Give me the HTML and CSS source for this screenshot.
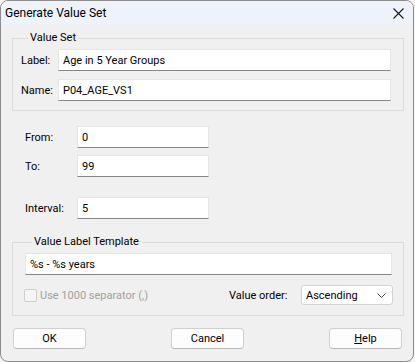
FILE: index.html
```html
<!DOCTYPE html>
<html lang="en">
<head>
    <meta charset="UTF-8">
    <title>Generate Value Set</title>
    <link rel="stylesheet" href="styles.css">
</head>
<body>

<div class="window">
    <div class="titlebar">
        <span class="title">Generate Value Set</span>
        <svg class="close" width="11" height="11" viewBox="0 0 11 11">
            <path d="M0.5 0.5 L10.5 10.5 M10.5 0.5 L0.5 10.5" stroke="#1a1a1a" stroke-width="1.1" fill="none"/>
        </svg>
    </div>

    <!-- Value set -->
    <fieldset class="group group-set">
        <legend>Value Set</legend>
        <div class="row">
            <label class="lbl lbl-set">Label:</label>
            <div class="input wide">Age in 5 Year Groups</div>
        </div>
        <div class="row">
            <label class="lbl lbl-set">Name:</label>
            <div class="input wide">P04_AGE_VS1</div>
        </div>
    </fieldset>

    <!-- Range -->
    <div class="range">
        <div class="row">
            <label class="lbl lbl-range">From:</label>
            <div class="input short">0</div>
        </div>
        <div class="row">
            <label class="lbl lbl-range">To:</label>
            <div class="input short">99</div>
        </div>
        <div class="row row-interval">
            <label class="lbl lbl-range">Interval:</label>
            <div class="input short">5</div>
        </div>
    </div>

    <!-- Template -->
    <fieldset class="group group-template">
        <legend>Value Label Template</legend>
        <div class="input template">%s - %s years</div>
        <div class="options">
            <div class="check">
                <span class="box"></span>
                <span>Use 1000 separator (,)</span>
            </div>
            <div class="order">
                <span>Value order:</span>
                <div class="select">
                    <span>Ascending</span>
                    <svg width="9" height="5" viewBox="0 0 9 5">
                        <path d="M0.5 0.5 L4.5 4.5 L8.5 0.5" stroke="#444" stroke-width="1" fill="none"/>
                    </svg>
                </div>
            </div>
        </div>
    </fieldset>

    <div class="buttons">
        <button class="btn">OK</button>
        <button class="btn">Cancel</button>
        <button class="btn"><u>H</u>elp</button>
    </div>
</div>

</body>
</html>
```

FILE: styles.css
```css
body {
    margin: 0;
    background-color: #f3f3f3;
    font-family: 'Roboto', 'Liberation Sans', sans-serif;
    font-size: 11px;
    color: #000;
}

.window {
    width: 412px;
    height: 360px;
    border: 1px solid #8c8c8c;
    border-radius: 8px;
    background-color: #f0f0f0;
    overflow: hidden;
}

.titlebar {
    height: 24px;
    display: flex;
    align-items: center;
    justify-content: space-between;
    padding: 0 9px 0 4px;
    background-color: #eef2f9;
}

.title {
    font-size: 12px;
    line-height: 16px;
}

/* group boxes */
.group {
    margin: 5px 9px 0 11px;
    padding: 3px 12px 9px 8px;
    border: 1px solid #dcdcdc;
    min-inline-size: 0;
}

.group legend {
    padding: 0 2px;
    margin-left: 7px;
    line-height: 16px;
}

.row {
    display: flex;
    align-items: center;
}

.group-set .row + .row {
    margin-top: 8px;
}

.lbl {
    flex: none;
}

.lbl-set {
    width: 37px;
}

.lbl-range {
    width: 52px;
}

.input {
    box-sizing: border-box;
    height: 22px;
    padding: 0 4px;
    line-height: 21px;
    background-color: #fff;
    border: 1px solid #e6e6e6;
    border-bottom-color: #868686;
}

.wide {
    flex: 1;
}

.short {
    width: 132px;
}

.range {
    margin: 15px 0 0 24px;
}

.range .row + .row {
    margin-top: 7px;
}

.range .row.row-interval {
    margin-top: 20px;
}

.group-template {
    margin-top: 15px;
    padding: 3px 11px 10px 12px;
}

.template {
    width: 100%;
}

.options {
    display: flex;
    align-items: center;
    justify-content: space-between;
    margin-top: 10px;
    margin-left: -1px;
    margin-right: -1px;
}

.check {
    display: flex;
    align-items: center;
    gap: 3px;
    color: #a0a0a0;
}

.box {
    box-sizing: border-box;
    width: 13px;
    height: 13px;
    border: 1px solid #cfcfcf;
    border-radius: 2px;
    background-color: #f5f5f5;
}

.order {
    display: flex;
    align-items: center;
}

.order > span {
    width: 72px;
}

.select {
    box-sizing: border-box;
    width: 92px;
    height: 20px;
    display: flex;
    align-items: center;
    justify-content: space-between;
    padding: 0 6px 0 4px;
    background-color: #fff;
    border: 1px solid #d3d3d3;
    border-radius: 3px;
}

.buttons {
    display: flex;
    justify-content: space-between;
    margin: 12px 11px 0 12px;
}

.btn {
    box-sizing: border-box;
    width: 73px;
    height: 21px;
    padding: 0;
    font-family: inherit;
    font-size: 11px;
    color: #000;
    background-color: #fdfdfd;
    border: 1px solid #d0d0d0;
    border-bottom-color: #b8b8b8;
    border-radius: 4px;
}
```
